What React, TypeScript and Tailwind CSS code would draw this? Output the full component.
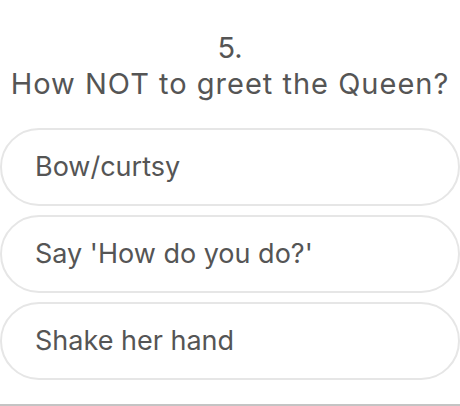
const options = ["Bow/curtsy", "Say 'How do you do?'", "Shake her hand"];

export default function App() {
  return (
    <div className="w-[460px] h-[406px] bg-white flex flex-col overflow-hidden text-[#555555] font-['Inter',sans-serif]">
      <div className="pt-[30px] text-center text-[29px] leading-[36px]">
        <div>5.</div>
        <div className="tracking-[1px]">How NOT to greet the Queen?</div>
      </div>
      <div className="mt-[26px] flex flex-col gap-[9px]">
        {options.map((o) => (
          <button
            key={o}
            className="w-[460px] h-[78px] border-2 border-[#e6e6e6] rounded-full bg-white pl-[33px] text-left text-[27px]"
          >
            {o}
          </button>
        ))}
      </div>
      <div className="mt-auto h-[2px] bg-[#c4c4c4]" />
    </div>
  );
}
